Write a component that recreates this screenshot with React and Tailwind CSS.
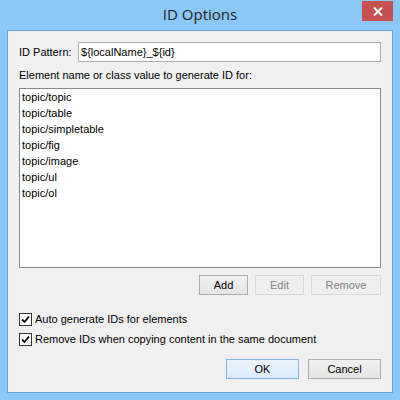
import React from "react";

const items = ["topic/topic","topic/table","topic/simpletable","topic/fig","topic/image","topic/ul","topic/ol"];

function Check({ label, className }) {
  return (
    <div className={"flex items-center h-[14px] " + className}>
      <div className="w-[13px] h-[13px] border border-[#333333] bg-white flex items-center justify-center">
        <svg width="9" height="9" viewBox="0 0 9 9"><path d="M1 4.5 L3.5 7 L8 1.5" fill="none" stroke="#000" strokeWidth="1.8" /></svg>
      </div>
      <span className="ml-[3px] text-black leading-none">{label}</span>
    </div>
  );
}

export default function App() {
  return (
    <div className="w-[400px] h-[400px] bg-[#8bc7f7] flex flex-col" style={{ fontFamily: '"Liberation Sans", Arial, sans-serif' }}>
      <div className="h-[30px] flex relative items-center justify-center">
        <span className="text-[15px] text-[#222] mt-[-1px]" style={{ fontFamily: '"Open Sans", sans-serif' }}>ID Options</span>
        <div className="absolute left-[362px] top-[1px] w-[31px] h-[20px] bg-[#c75050] flex items-center justify-center">
          <svg width="10" height="9" viewBox="0 0 10 9"><path d="M1 0.5 L9 8.5 M9 0.5 L1 8.5" stroke="#fff" strokeWidth="2" /></svg>
        </div>
      </div>
      <div className="ml-[7px] w-[386px] h-[363px] border border-[#6d9fcf] bg-[#f0f0f0] px-[11px] pt-[11px] flex flex-col text-[11px] text-black">
        <div className="flex items-center h-[20px]">
          <span className="w-[59px]">ID Pattern:</span>
          <div className="flex-1 h-[20px] border border-[#abadb3] bg-white flex items-center pl-[2px]">${"{localName}"}_${"{id}"}</div>
        </div>
        <div className="mt-[7px] h-[12px] leading-[12px]">Element name or class value to generate ID for:</div>
        <div className="mt-[7px] h-[180px] border border-[#828790] bg-white pl-[2px]">
          {items.map((t) => (
            <div key={t} className="h-[16px] leading-[16px]">{t}</div>
          ))}
        </div>
        <div className="mt-[7px] flex justify-end gap-[7px] h-[20px]">
          <div className="w-[49px] h-[20px] border border-[#adadad] bg-gradient-to-b from-[#f0f0f0] to-[#e5e5e5] flex items-center justify-center">Add</div>
          <div className="w-[49px] h-[20px] border border-[#d9d9d9] bg-[#efefef] text-[#838383] flex items-center justify-center">Edit</div>
          <div className="w-[70px] h-[20px] border border-[#d9d9d9] bg-[#efefef] text-[#838383] flex items-center justify-center">Remove</div>
        </div>
        <Check label="Auto generate IDs for elements" className="mt-[17px]" />
        <Check label="Remove IDs when copying content in the same document" className="mt-[6px]" />
        <div className="mt-[13px] flex justify-end gap-[9px]">
          <div className="w-[73px] h-[20px] border border-[#7eb4ea] bg-gradient-to-b from-[#ecf4fc] to-[#dcecfc] flex items-center justify-center">OK</div>
          <div className="w-[73px] h-[20px] border border-[#adadad] bg-gradient-to-b from-[#f0f0f0] to-[#e5e5e5] flex items-center justify-center">Cancel</div>
        </div>
      </div>
    </div>
  );
}
